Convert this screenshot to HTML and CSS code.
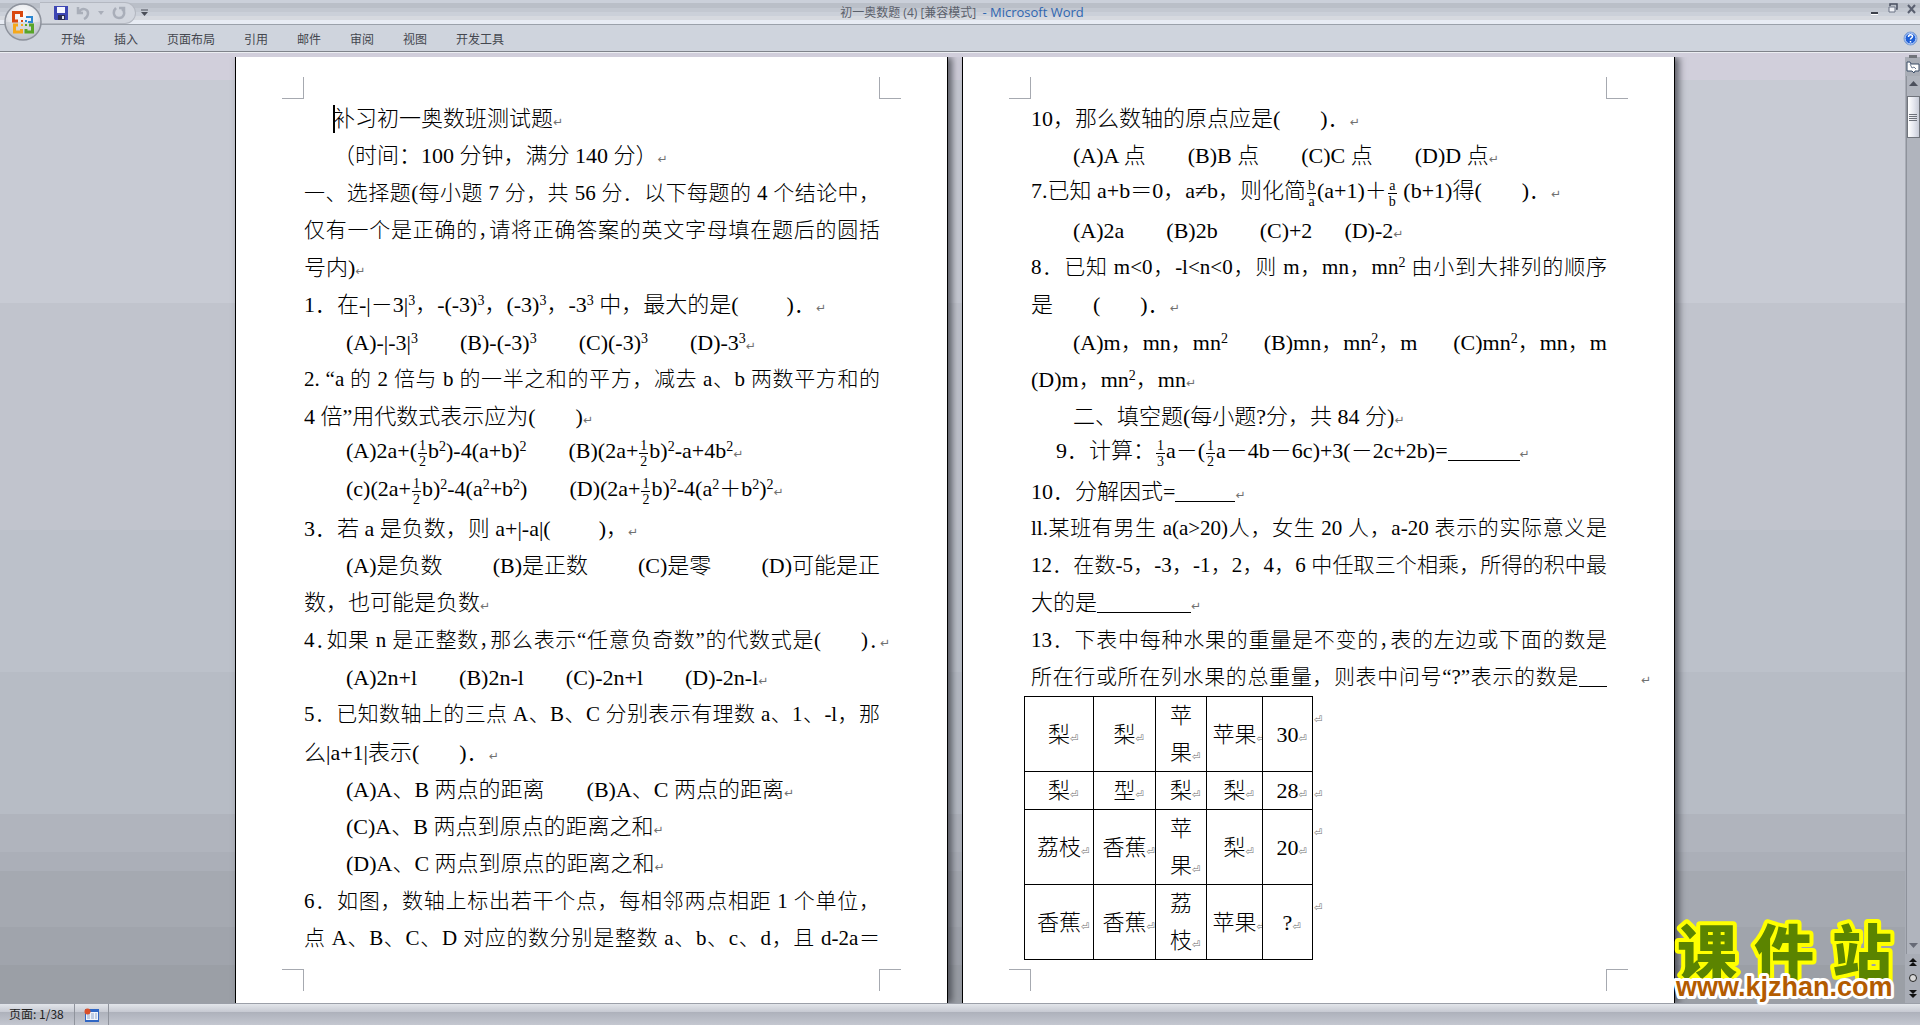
FILE: index.html
```html
<!DOCTYPE html>
<html lang="zh-CN">
<head>
<meta charset="utf-8">
<title>初一奥数题 (4) [兼容模式] - Microsoft Word</title>
<link rel="stylesheet" href="styles.css">
</head>
<body>
<header class="titlebar">
  <div class="quick">
    <button class="icon-btn" aria-label="保存"><svg width="14" height="14" viewBox="0 0 14 14"><path d="M0 0h14v14H1l-1-1z" fill="#3d46b4"/><path d="M3 1h8v6H3z" fill="#f4f6ff"/><path d="M4 9h7v5H4z" fill="#2a2c50"/><path d="M8 10h2v3H8z" fill="#dfe3f0"/></svg></button>
    <button class="icon-btn undo" aria-label="撤消"><svg width="14" height="14" viewBox="0 0 14 14"><path d="M2 1v6h5M3 6c3-5 9-3 9 1c0 3-2 5-4 6" fill="none" stroke="#a9aeb9" stroke-width="2.500"/></svg></button>
    <span class="arrow pale"></span>
    <button class="icon-btn redo" aria-label="重复"><svg width="14" height="14" viewBox="0 0 14 14"><path d="M4 2c-4 4-2 10 3 10s7-6 3-9M7 2h5v5" fill="none" stroke="#a9aeb9" stroke-width="2.500"/></svg></button>
  </div>
  <button class="icon-btn more" aria-label="自定义"><svg width="7" height="8" viewBox="0 0 7 8"><path d="M0 1h7" stroke="#4a4e58"/><path d="M0 3h7L3.500 7z" fill="#4a4e58"/></svg></button>
  <h1 class="caption">初一奥数题 (4) [兼容模式] <span class="app">- Microsoft Word</span></h1>
  <div class="winbtns">
    <button class="icon-btn" aria-label="最小化"><svg width="8" height="12" viewBox="0 0 8 12"><path d="M0 9h7v2H0z" fill="#3c404a"/><path d="M0 11h7v1H0z" fill="#fff"/></svg></button>
    <button class="icon-btn" aria-label="还原"><svg width="10" height="12" viewBox="0 0 10 12"><path d="M2 3V1h7v5H8" fill="none" stroke="#4a5060" stroke-width="1.500"/><path d="M1 4h6v5H1z" fill="#eef0f5" stroke="#6a7284"/></svg></button>
    <button class="icon-btn" aria-label="关闭"><svg width="10" height="12" viewBox="0 0 10 12"><path d="M1 2l7 8M8 2l-7 8" stroke="#5a6070" stroke-width="2"/></svg></button>
  </div>
</header>
<button class="office" aria-label="Office">
  <svg width="38" height="38" viewBox="0 0 38 38">
    <defs>
      <radialGradient id="orb" cx=".5" cy=".3" r=".7"><stop offset="0" stop-color="#fff"/><stop offset=".6" stop-color="#e3e5ea"/><stop offset="1" stop-color="#b4b8c0"/></radialGradient>
    </defs>
    <circle cx="19" cy="19" r="18" fill="url(#orb)" stroke="#8d929c" stroke-width="1.500"/>
    <path d="M2 19a17 17 0 0 0 34 0z" fill="#c4c8d0" opacity=".5"/>
    <path d="M14 18H9.500V9.500h8V14" fill="none" stroke="#d9480f" stroke-width="3"/>
    <path d="M22 14h6v5h-4" fill="none" stroke="#2a86d1" stroke-width="2"/>
    <path d="M14 22h-3.500v7h7v-3" fill="none" stroke="#f5a81c" stroke-width="3"/>
    <path d="M25 22h3.500v7H22v-3" fill="none" stroke="#58a528" stroke-width="3"/>
    <path d="M17 17h2v2h-2z" fill="#d9480f"/><path d="M21 17h2v2h-2z" fill="#2a86d1"/><path d="M17 21h2v2h-2z" fill="#f5a81c"/><path d="M21 21h2v2h-2z" fill="#58a528"/>
  </svg>
</button>
<nav class="tabs">
  <button>开始</button><button>插入</button><button>页面布局</button><button>引用</button><button>邮件</button><button>审阅</button><button>视图</button><button>开发工具</button>
  <button class="help" aria-label="帮助"><svg width="15" height="15" viewBox="0 0 15 15"><circle cx="7.500" cy="7.500" r="6.500" fill="#1f5fd6" stroke="#7f9fd0"/><circle cx="7.500" cy="7.500" r="5.500" fill="none" stroke="#dbe8ff"/><path d="M5.500 6c0-3 4-3 4-.5c0 1.500-2 1.500-2 3M7.500 10v1.500" fill="none" stroke="#fff" stroke-width="1.500"/></svg></button>
</nav>
<main class="workspace">
  <div class="desk">
    <article class="page">
      <i class="crop tl"></i><i class="crop tr"></i><i class="crop bl"></i><i class="crop br"></i>
      <p class="head"><span class="caret"></span>补习初一奥数班测试题<i class="mark"></i></p>
      <p class="head">（时间：100 分钟，满分 140 分）<i class="mark"></i></p>
      <p class="full">一、选择题(每小题 7 分，共 56 分．以下每题的 4 个结论中，</p>
      <p class="full">仅有一个是正确的<span class="half">，</span>请将正确答案的英文字母填在题后的圆括</p>
      <p>号内)<i class="mark"></i></p>
      <p>1．在-|－3|<sup>3</sup>，-(-3)<sup>3</sup>，(-3)<sup>3</sup>，-3<sup>3</sup> 中，最大的是(<span class="gap wide"></span>)．<i class="mark"></i></p>
      <p class="options"><span>(A)-|-3|<sup>3</sup></span><span>(B)-(-3)<sup>3</sup></span><span>(C)(-3)<sup>3</sup></span><span>(D)-3<sup>3</sup><i class="mark"></i></span></p>
      <p class="full">2. “a 的 2 倍与 b 的一半之和的平方，减去 a、b 两数平方和的</p>
      <p>4 倍”用代数式表示应为(<span class="gap"></span>)<i class="mark"></i></p>
      <p class="options tall"><span>(A)2a+(<span class="frac"><span>1</span><span>2</span></span>b<sup>2</sup>)-4(a+b)<sup>2</sup></span><span>(B)(2a+<span class="frac"><span>1</span><span>2</span></span>b)<sup>2</sup>-a+4b<sup>2</sup><i class="mark"></i></span></p>
      <p class="options tall"><span>(c)(2a+<span class="frac"><span>1</span><span>2</span></span>b)<sup>2</sup>-4(a<sup>2</sup>+b<sup>2</sup>)</span><span>(D)(2a+<span class="frac"><span>1</span><span>2</span></span>b)<sup>2</sup>-4(a<sup>2</sup>＋b<sup>2</sup>)<sup>2</sup><i class="mark"></i></span></p>
      <p>3．若 a 是负数，则 a+|-a|(<span class="gap wide"></span>)，<i class="mark"></i></p>
      <p class="options spread"><span>(A)是负数</span><span>(B)是正数</span><span>(C)是零</span><span>(D)可能是正</span></p>
      <p>数，也可能是负数<i class="mark"></i></p>
      <p class="full">4<span class="half">．</span>如果 n 是正整数<span class="half">，</span>那么表示“任意负奇数”的代数式是(<span class="gap"></span>)<span class="half">．</span><i class="mark"></i></p>
      <p class="options"><span>(A)2n+l</span><span>(B)2n-l</span><span>(C)-2n+l</span><span>(D)-2n-l<i class="mark"></i></span></p>
      <p class="full">5．已知数轴上的三点 A、B、C 分别表示有理数 a、1、-l，那</p>
      <p>么|a+1|表示(<span class="gap"></span>)．<i class="mark"></i></p>
      <p class="options"><span>(A)A、B 两点的距离</span><span>(B)A、C 两点的距离<i class="mark"></i></span></p>
      <p class="options"><span>(C)A、B 两点到原点的距离之和<i class="mark"></i></span></p>
      <p class="options"><span>(D)A、C 两点到原点的距离之和<i class="mark"></i></span></p>
      <p class="full">6．如图，数轴上标出若干个点，每相邻两点相距 1 个单位，</p>
      <p class="full">点 A、B、C、D 对应的数分别是整数 a、b、c、d，且 d-2a＝</p>
    </article>
    <article class="page">
      <i class="crop tl"></i><i class="crop tr"></i><i class="crop bl"></i><i class="crop br"></i>
      <p>10，那么数轴的原点应是(<span class="gap"></span>)．<i class="mark"></i></p>
      <p class="options"><span>(A)A 点</span><span>(B)B 点</span><span>(C)C 点</span><span>(D)D 点<i class="mark"></i></span></p>
      <p class="tall">7.已知 a+b＝0，a≠b，则化简<span class="frac"><span>b</span><span>a</span></span>(a+1)＋<span class="frac"><span>a</span><span>b</span></span> (b+1)得(<span class="gap"></span>)．<i class="mark"></i></p>
      <p class="options"><span>(A)2a</span><span>(B)2b</span><span>(C)+2<span class="gap short"></span>(D)-2<i class="mark"></i></span></p>
      <p class="full">8．已知 m&lt;0，-l&lt;n&lt;0，则 m，mn，mn<sup>2</sup> 由小到大排列的顺序</p>
      <p>是<span class="gap"></span>(<span class="gap"></span>)．<i class="mark"></i></p>
      <p class="options spread"><span>(A)m，mn，mn<sup>2</sup></span><span>(B)mn，mn<sup>2</sup>，m</span><span>(C)mn<sup>2</sup>，mn，m</span></p>
      <p>(D)m，mn<sup>2</sup>，mn<i class="mark"></i></p>
      <p class="options"><span>二、填空题(每小题?分，共 84 分)<i class="mark"></i></span></p>
      <p class="tall inset">9．计算：<span class="frac"><span>1</span><span>3</span></span>a－(<span class="frac"><span>1</span><span>2</span></span>a－4b－6c)+3(－2c+2b)=<span class="blank b72"></span><i class="mark"></i></p>
      <p>10．分解因式=<span class="blank b60"></span><i class="mark"></i></p>
      <p class="full">ll.某班有男生 a(a&gt;20)人，女生 20 人，a-20 表示的实际意义是</p>
      <p class="full">12．在数-5，-3，-1，2，4，6 中任取三个相乘，所得的积中最</p>
      <p>大的是<span class="blank b94"></span><i class="mark"></i></p>
      <p class="full">13．下表中每种水果的重量是不变的<span class="half">，</span>表的左边或下面的数是</p>
      <p class="full">所在行或所在列水果的总重量，则表中问号“?”表示的数是<span class="blank b28"></span><i class="mark hang"></i></p>
      <table class="fruit">
        <colgroup><col class="c1"><col class="c2"><col class="c3"><col class="c4"><col class="c5"><col class="c6"></colgroup>
        <tr class="high"><td>梨<i class="mark cell"></i></td><td>梨<i class="mark cell"></i></td><td>苹<br>果<i class="mark cell"></i></td><td>苹果<i class="mark cell"></i></td><td>30<i class="mark cell"></i></td><td class="rowend"><i class="mark cell"></i></td></tr>
        <tr><td>梨<i class="mark cell"></i></td><td>型<i class="mark cell"></i></td><td>梨<i class="mark cell"></i></td><td>梨<i class="mark cell"></i></td><td>28<i class="mark cell"></i></td><td class="rowend"><i class="mark cell"></i></td></tr>
        <tr class="high"><td>荔枝<i class="mark cell"></i></td><td>香蕉<i class="mark cell"></i></td><td>苹<br>果<i class="mark cell"></i></td><td>梨<i class="mark cell"></i></td><td>20<i class="mark cell"></i></td><td class="rowend"><i class="mark cell"></i></td></tr>
        <tr class="high"><td>香蕉<i class="mark cell"></i></td><td>香蕉<i class="mark cell"></i></td><td>荔<br>枝<i class="mark cell"></i></td><td>苹果<i class="mark cell"></i></td><td>?<i class="mark cell"></i></td><td class="rowend"><i class="mark cell"></i></td></tr>
      </table>
    </article>
  </div>
  <aside class="scroll">
    <span class="split"></span>
    <button class="icon-btn ruler" aria-label="标尺"><svg width="14" height="14" viewBox="0 0 14 14"><path d="M1 2h3l1 2h8v7H9l-1 2-2-2H1z" fill="#fff" stroke="#3a4c66"/><path d="M4 4l2 4 2-1 2 2" fill="none" stroke="#6c7a90"/></svg></button>
    <div class="track">
      <svg width="9" height="6" viewBox="0 0 9 6"><path d="M0 5h9L4.500 0z" fill="#4c505c"/></svg>
      <div class="thumb"><i></i><i></i><i></i><i></i></div>
      <svg class="down" width="9" height="6" viewBox="0 0 9 6"><path d="M0 0h9L4.500 5z" fill="#666a76"/></svg>
    </div>
    <div class="browse">
      <svg width="8" height="8" viewBox="0 0 8 8"><path d="M0 4h8L4 0zM0 8h8L4 4z" fill="#111"/></svg>
      <svg width="8" height="8" viewBox="0 0 8 8"><circle cx="4" cy="4" r="3.500" fill="#d8d8d8" stroke="#222"/></svg>
      <svg width="8" height="8" viewBox="0 0 8 8"><path d="M0 0h8L4 4zM0 4h8L4 8z" fill="#111"/></svg>
    </div>
  </aside>
  <svg class="stamp" width="240" height="84" viewBox="0 0 240 84">
    <text class="stamp-name" x="10 87 165" y="48">课件站</text>
    <text class="stamp-url" x="9" y="69">www.kjzhan.com</text>
  </svg>
</main>
<footer class="status">
  <span class="pageno">页面: 1/38</span>
  <button class="macro" aria-label="宏"><svg width="15" height="14" viewBox="0 0 15 14"><path d="M1 1h14v13H1z" fill="#2f66c4"/><path d="M2 4h12v8H2z" fill="#f2f5fb"/><path d="M3 6h10M3 8h10M3 10h10" stroke="#8fa6cc" stroke-dasharray="3 1"/><circle cx="3.500" cy="3.500" r="3" fill="#d9502a"/></svg></button>
</footer>
</body>
</html>
```
FILE: styles.css
```css
* { box-sizing: border-box; }
body {
  margin: 0;
  height: 100vh;
  display: flex;
  flex-direction: column;
  position: relative;
  overflow: hidden;
  font: 12px/16px "Noto Sans CJK SC", sans-serif;
  color: #44474f;
  background: #cfd4dd;
}
button { margin: 0; padding: 0; border: 0; background: none; font: inherit; color: inherit; }
svg { display: block; }
p { margin: 0; }

/* title bar */
.titlebar {
  flex: none;
  display: grid;
  grid-template-columns: auto 1fr auto 1fr;
  align-items: center;
  height: 25px;
  border-bottom: 1px solid #9ba1aa;
  background: linear-gradient(#cbd0da 0 3px, #babfc8 3px 8px, #c3c8d1 8px 12px, #cbd0d9 12px 16px, #d6d9df 16px 20px, #e8ecf4 20px);
}
.quick {
  display: flex;
  align-items: center;
  height: 22px;
  width: 96px;
  margin-left: 40px;
  padding-left: 14px;
  gap: 8px;
  border: 1px solid #b4b8c1;
  border-left: 0;
  border-radius: 0 11px 11px 0;
  background: #d2d6de;
}
.arrow { width: 0; border: 3px solid transparent; border-top: 4px solid #a9aeb9; border-bottom: 0; }
.more { justify-self: start; margin-left: 5px; }
.caption {
  margin: 0 132px 0 0;
  font: 300 12px/24px "Open Sans", "Noto Sans CJK SC", sans-serif;
  font-weight: 400;
  color: #5b606b;
  white-space: nowrap;
}
.app { color: #2f66b0; margin-left: 3px; font-size: 13px; }
.winbtns { display: flex; justify-self: end; gap: 9px; padding-right: 3px; margin-top: -8px; }

.office { position: absolute; left: 4px; top: 3px; z-index: 2; }

/* ribbon tabs */
.tabs {
  flex: none;
  display: flex;
  align-items: center;
  gap: 29px;
  height: 28px;
  padding: 0 2px 0 61px;
  border-bottom: 1px solid #eceef2;
  box-shadow: inset 0 -1px #7f838a;
  background: #cfd4dd;
}
.help { margin-left: auto; }

/* document area */
.workspace {
  flex: 1;
  min-height: 0;
  display: flex;
  position: relative;
  border-top: 4px solid #d1cedb;
  background: linear-gradient(#d1cfdb 0 23px, #c8cbd4 23px 26%, #c1c4cd 26% 50%, #bcc1ca 50% 65%, #b7bcc5 65% 80%, #b0b4bd 80% 84%, #abafb8 84% 86%, #a5a9b1 86% 92%, #a0a4ac 92% 96%, #9b9fa6 96%);
}
.desk {
  flex: 1;
  display: flex;
  justify-content: center;
  gap: 14px;
  padding-left: 5px;
  overflow: hidden;
}
.page {
  flex: none;
  position: relative;
  width: 713px;
  display: flex;
  flex-direction: column;
  justify-content: space-between;
  padding: 43px 67px 46px 68px;
  border: solid #000;
  border-width: 0 1px;
  background: #fff;
  box-shadow: 4px 0 7px 0 rgba(60, 63, 70, .8);
  color: #000;
  font: 300 22px/37px "Liberation Serif", "Noto Sans CJK SC", serif;
  white-space: nowrap;
}
.crop { position: absolute; width: 22px; height: 22px; border: 0 solid #a6a9b0; }
.tl { left: 46px; top: 20px; border-width: 0 1px 1px 0; }
.tr { right: 46px; top: 20px; border-width: 0 0 1px 1px; }
.bl { left: 46px; bottom: 12px; border-width: 1px 1px 0 0; }
.br { right: 46px; bottom: 12px; border-width: 1px 0 0 1px; }

.page p { height: 37px; }
.head { padding-left: 29px; }
.inset { padding-left: 25px; }
.page .full { font-size: 21px; text-align: justify; text-align-last: justify; }
.options { display: flex; gap: 42px; padding-left: 42px; }
.spread { justify-content: space-between; gap: 0; }
.tall { line-height: 31px; }
.half { font-feature-settings: "halt"; }
sup { font-size: 14px; line-height: 0; vertical-align: 7px; }
.gap { display: inline-block; width: 40px; }
.wide { width: 48px; }
.short { width: 32px; }
.frac {
  display: inline-flex;
  flex-direction: column;
  vertical-align: 8px;
  margin: 0 1px;
  font-size: 14px;
  line-height: 15px;
  text-align: center;
}
.frac span { width: 9px; }
.frac span:first-child { border-bottom: 1px solid #000; }
.blank { display: inline-block; height: 1px; background: #000; vertical-align: -3px; }
.b72 { width: 72px; }
.b60 { width: 60px; }
.b94 { width: 94px; }
.b28 { width: 28px; }
.caret { position: absolute; width: 2px; height: 28px; margin-top: 5px; background: #000; }

/* paragraph marks take no room in the line */
.mark {
  display: inline-block;
  width: 0;
  font: 12px/12px "DejaVu Sans", sans-serif;
  color: #707070;
  text-align: left;
  text-align-last: left;
}
.mark::after { content: "↵"; }
.mark.cell { font-size: 10px; }
.cell::after { content: "⏎"; }
.hang { text-indent: 34px; }

.fruit { width: 306px; margin: 0 0 -3px -7px; border-collapse: collapse; table-layout: fixed; font: inherit; }
.c1 { width: 69px; }
.c2 { width: 62px; }
.c3 { width: 51px; }
.c4 { width: 56px; }
.c5 { width: 50px; }
.c6 { width: 18px; }
.fruit td { height: 38px; padding: 0; border: 1px solid #000; text-align: center; overflow: hidden; }
.fruit .high td { height: 75px; }
.fruit .rowend { border: 0; text-align: left; vertical-align: top; padding-left: 1px; }

/* scroll bar */
.scroll { flex: none; width: 15px; display: flex; flex-direction: column; align-items: center; background: #a9adb6; }
.split { width: 8px; height: 3px; margin-top: -2px; background: #70737a; }
.ruler { margin: 2px 0; }
.track { flex: 1; width: 14px; display: flex; flex-direction: column; align-items: center; padding-top: 5px; background: #b0b4bd; border-left: 1px solid #8e929b; }
.thumb {
  width: 13px;
  height: 42px;
  margin-top: 9px;
  display: flex;
  flex-direction: column;
  align-items: center;
  justify-content: center;
  gap: 1px;
  border: 1px solid #70747c;
  background: linear-gradient(90deg, #fff, #e6e8f0 50%, #c8ccd8);
}
.thumb i { width: 8px; height: 1px; background: #6d717b; }
.down { margin-top: auto; margin-bottom: 5px; }
.browse { display: flex; flex-direction: column; gap: 8px; padding: 4px 0 5px; }

.stamp { position: absolute; right: 13px; bottom: -8px; overflow: visible; z-index: 3; }
.stamp text { paint-order: stroke; stroke-linejoin: round; font-weight: 700; }
.stamp .stamp-name { font-family: "Noto Sans CJK SC", sans-serif; font-size: 60px; font-weight: 900; fill: #5b8400; stroke: #ff0; stroke-width: 8px; }
.stamp-url { font-family: "Liberation Sans", sans-serif; font-size: 27px; fill: #b35b00; stroke: #fff; stroke-width: 6px; }

/* status bar */
.status {
  flex: none;
  display: flex;
  height: 22px;
  border-top: 1px solid #9b9fa8;
  background: linear-gradient(#e2e5ea, #c6c9d2 8px, #adb1bb 8px, #c4c7d0);
  color: #222;
}
.pageno { width: 75px; padding: 2px 0 0 9px; border-right: 1px solid #8f939c; white-space: nowrap; }
.macro { width: 34px; padding-left: 9px; border-right: 1px solid #8f939c; }
```
